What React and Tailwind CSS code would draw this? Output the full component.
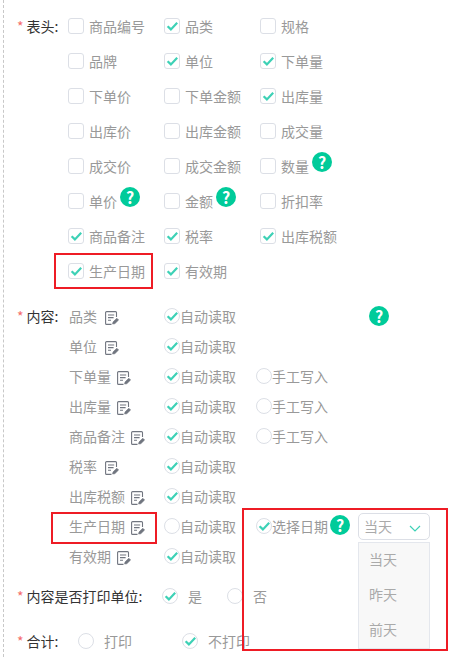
const CJK = "font-['Microsoft_YaHei','Noto_Sans_CJK_SC','Noto_Sans',sans-serif]";

function Check({ className = "" }) {
  return (
    <svg viewBox="0 0 16 16" className={"absolute inset-0 h-4 w-4 " + className} fill="none">
      <path d="M3.6 8.2 L6.9 11.4 L13.2 4.8" stroke="#3dd1b6" strokeWidth="2.2" />
    </svg>
  );
}

function Box({ checked, label, help }) {
  return (
    <div className="flex items-center">
      <span className="relative h-4 w-4 shrink-0 rounded-[3px] border border-[#dcdfe6] bg-white">
        {checked && <Check className="-left-px -top-px" />}
      </span>
      <span className="ml-[5px] whitespace-nowrap text-sm text-[#999]">{label}</span>
      {help && <Help className="ml-[3px] -mt-[8px]" />}
    </div>
  );
}

function Help({ className = "" }) {
  return (
    <span className={"flex h-5 w-5 shrink-0 items-center justify-center rounded-full bg-[#00cb9a] text-base font-bold leading-none text-white " + className}>?</span>
  );
}

function Radio({ checked, label, gap = "ml-0" }) {
  return (
    <div className="flex items-center">
      <span className="relative -mt-px h-4 w-4 shrink-0 rounded-full border border-[#dcdfe6] bg-white">
        {checked && <Check className="-left-px -top-px" />}
      </span>
      <span className={"whitespace-nowrap text-sm text-[#999] " + gap}>{label}</span>
    </div>
  );
}

function EditIcon() {
  return (
    <svg viewBox="0 0 14 14" className="ml-[6px] mt-[4px] h-[14px] w-[14px] shrink-0" fill="none" stroke="#70757f" strokeWidth="1.1">
      <path d="M11.5 6 V1.6 a1 1 0 0 0 -1 -1 H1.6 a1 1 0 0 0 -1 1 V12.4 a1 1 0 0 0 1 1 H6.5" />
      <path d="M3 4 H9.2 M3 6.6 H8.6 M3 9.2 H6" />
      <path d="M7.6 13 L8 11 L11.8 7.2 L13.6 9 L9.8 12.7 Z" fill="#70757f" strokeWidth=".6" />
    </svg>
  );
}

const headRows = [
  [["商品编号", 0], ["品类", 1], ["规格", 0]],
  [["品牌", 0], ["单位", 1], ["下单量", 1]],
  [["下单价", 0], ["下单金额", 0], ["出库量", 1]],
  [["出库价", 0], ["出库金额", 0], ["成交量", 0]],
  [["成交价", 0], ["成交金额", 0], ["数量", 0, 1]],
  [["单价", 0, 1], ["金额", 0, 1], ["折扣率", 0]],
  [["商品备注", 1], ["税率", 1], ["出库税额", 1]],
  [["生产日期", 1], ["有效期", 1]],
];

const contentRows = [
  ["品类", 1, "help"],
  ["单位", 1],
  ["下单量", 1, "手工写入"],
  ["出库量", 1, "手工写入"],
  ["商品备注", 1, "手工写入"],
  ["税率", 1],
  ["出库税额", 1],
  ["生产日期", 0, "date"],
  ["有效期", 1],
];

function Label({ children, className = "" }) {
  return (
    <div className={"flex items-center whitespace-nowrap text-sm text-[#333] " + className}>
      <span className="mr-[3px] text-[#f56c6c]">*</span>
      {children}
    </div>
  );
}

export default function App() {
  return (
    <div className={"relative h-[657px] w-[453px] overflow-hidden bg-white " + CJK}>
      <div className="ml-[3px] h-full border-l border-dashed border-[#c8c8c8] pt-[8px]">
        <div className="flex">
          <Label className="ml-[13px] h-[35px] w-[51px] shrink-0">表头:</Label>
          <div className="flex flex-col">
            {headRows.map((row, i) => (
              <div key={i} className="grid h-[35px] grid-cols-[96px_96px_96px] items-center">
                {row.map(([label, checked, help]) => (
                  <Box key={label} label={label} checked={!!checked} help={!!help} />
                ))}
              </div>
            ))}
          </div>
        </div>

        <div className="mt-[13px] flex">
          <Label className="ml-[13px] h-[30px] w-[52px] shrink-0">内容:</Label>
          <div className="flex flex-col">
            {contentRows.map(([label, auto, extra]) => (
              <div key={label} className="flex h-[30px] items-center">
                <div className="flex w-[95px] shrink-0 items-center text-sm text-[#999]">
                  <span className="min-w-[30px]">{label}</span>
                  <EditIcon />
                </div>
                <div className="w-[92px] shrink-0">
                  <Radio checked={!!auto} label="自动读取" />
                </div>
                {extra === "help" && <Help className="ml-[113px] -mt-px" />}
                {extra === "手工写入" && <Radio label="手工写入" />}
                {extra === "date" && (
                  <div className="flex items-center">
                    <Radio checked label="选择日期" />
                    <Help className="ml-[2px] -mt-[3px]" />
                    <div className="relative ml-[8px]">
                      <div className="flex h-[27px] w-[72px] items-center justify-between rounded-[5px] border border-[#dcdfe6] pl-[5px] pr-[8px] text-sm text-[#aaa]">
                        当天
                        <svg viewBox="0 0 12 12" className="mt-[3px] h-3 w-3" fill="none" stroke="#3dd1b6" strokeWidth="1.2">
                          <path d="M1 4 L6 9 L11 4" />
                        </svg>
                      </div>
                      <div className="absolute left-0 top-[29px] flex h-[107px] w-[72px] flex-col border border-[#e4e7ed] bg-[#f8f8f8] pl-[10px] text-sm text-[#aaa]">
                        <span className="-mt-px flex h-[35px] items-center">当天</span>
                        <span className="flex h-[35px] items-center">昨天</span>
                        <span className="flex h-[35px] items-center">前天</span>
                      </div>
                    </div>
                  </div>
                )}
              </div>
            ))}
          </div>
        </div>

        <div className="mt-[10px] flex h-[30px] items-center">
          <Label className="ml-[13px] w-[145px] shrink-0">内容是否打印单位:</Label>
          <div className="w-[65px] shrink-0"><Radio checked label="是" gap="ml-[10px]" /></div>
          <Radio label="否" gap="ml-[10px]" />
        </div>

        <div className="mt-[15px] flex h-[30px] items-center">
          <Label className="ml-[13px] w-[61px] shrink-0">合计:</Label>
          <div className="w-[104px] shrink-0"><Radio label="打印" gap="ml-[10px]" /></div>
          <Radio checked label="不打印" gap="ml-[10px]" />
        </div>
      </div>

      <div className="pointer-events-none absolute left-[54px] top-[253px] h-[36px] w-[99px] border-2 border-[#ee1c25]" />
      <div className="pointer-events-none absolute left-[51px] top-[512px] h-[32px] w-[106px] border-2 border-[#ee1c25]" />
      <div className="pointer-events-none absolute left-[242px] top-[508px] h-[143px] w-[206px] border-2 border-[#ee1c25]" />
    </div>
  );
}
